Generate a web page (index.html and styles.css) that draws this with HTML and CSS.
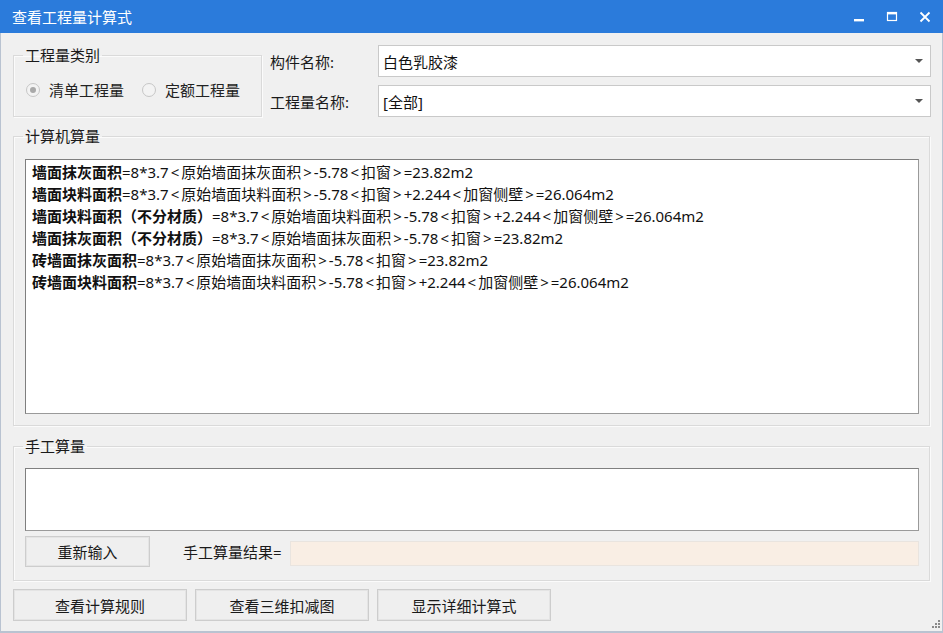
FILE: index.html
```html
<!DOCTYPE html>
<html lang="zh-CN">
<head>
<meta charset="utf-8">
<title>查看工程量计算式</title>
<link rel="stylesheet" href="styles.css">
</head>
<body>
<div class="window">
  <div class="titlebar">
    <span class="title">查看工程量计算式</span>
    <div class="controls">
      <svg class="ctl" width="14" height="14" viewBox="0 0 14 14"><rect x="2" y="9" width="10" height="2.4" fill="#fff"/></svg>
      <svg class="ctl" width="14" height="14" viewBox="0 0 14 14"><rect x="2.5" y="2.5" width="9" height="8" fill="none" stroke="#fff" stroke-width="1.2"/><rect x="2" y="2" width="10" height="2.4" fill="#fff"/></svg>
      <svg class="ctl" width="14" height="14" viewBox="0 0 14 14"><path d="M2.5 2.5 L11.5 11.5 M11.5 2.5 L2.5 11.5" stroke="#fff" stroke-width="1.8"/></svg>
    </div>
  </div>
  <div class="content">
    <div class="toprow">
      <fieldset class="group typegroup">
        <legend>工程量类别</legend>
        <div class="radios">
          <span class="radio"><span class="dot checked"></span>清单工程量</span>
          <span class="radio"><span class="dot"></span>定额工程量</span>
        </div>
      </fieldset>
      <div class="fields">
        <div class="field"><span class="flabel">构件名称:</span><div class="combo"><span>白色乳胶漆</span><span class="arrow"></span></div></div>
        <div class="field"><span class="flabel">工程量名称:</span><div class="combo"><span>[全部]</span><span class="arrow"></span></div></div>
      </div>
    </div>

    <fieldset class="group calcgroup">
      <legend>计算机算量</legend>
      <div class="textbox calcbox">
        <div class="line"><b>墙面抹灰面积</b>=8*3.7<i>&lt;</i>原始墙面抹灰面积<i>&gt;</i>-5.78<i>&lt;</i>扣窗<i>&gt;</i>=23.82m2</div>
        <div class="line"><b>墙面块料面积</b>=8*3.7<i>&lt;</i>原始墙面块料面积<i>&gt;</i>-5.78<i>&lt;</i>扣窗<i>&gt;</i>+2.244<i>&lt;</i>加窗侧壁<i>&gt;</i>=26.064m2</div>
        <div class="line"><b>墙面块料面积（不分材质）</b>=8*3.7<i>&lt;</i>原始墙面块料面积<i>&gt;</i>-5.78<i>&lt;</i>扣窗<i>&gt;</i>+2.244<i>&lt;</i>加窗侧壁<i>&gt;</i>=26.064m2</div>
        <div class="line"><b>墙面抹灰面积（不分材质）</b>=8*3.7<i>&lt;</i>原始墙面抹灰面积<i>&gt;</i>-5.78<i>&lt;</i>扣窗<i>&gt;</i>=23.82m2</div>
        <div class="line"><b>砖墙面抹灰面积</b>=8*3.7<i>&lt;</i>原始墙面抹灰面积<i>&gt;</i>-5.78<i>&lt;</i>扣窗<i>&gt;</i>=23.82m2</div>
        <div class="line"><b>砖墙面块料面积</b>=8*3.7<i>&lt;</i>原始墙面块料面积<i>&gt;</i>-5.78<i>&lt;</i>扣窗<i>&gt;</i>+2.244<i>&lt;</i>加窗侧壁<i>&gt;</i>=26.064m2</div>
      </div>
    </fieldset>

    <fieldset class="group handgroup">
      <legend>手工算量</legend>
      <div class="textbox handbox"></div>
      <div class="handrow">
        <div class="btn reinput">重新输入</div>
        <span class="reslabel">手工算量结果=</span>
        <div class="result"></div>
      </div>
    </fieldset>

    <div class="bottomrow">
      <div class="btn wide">查看计算规则</div>
      <div class="btn wide">查看三维扣减图</div>
      <div class="btn wide">显示详细计算式</div>
    </div>
  </div>
  <svg class="grip" width="10" height="10" viewBox="0 0 10 10">
    <rect x="7" y="1" width="2" height="2" fill="#8a8a8a"/>
    <rect x="4" y="4" width="2" height="2" fill="#8a8a8a"/>
    <rect x="7" y="4" width="2" height="2" fill="#8a8a8a"/>
    <rect x="1" y="7" width="2" height="2" fill="#8a8a8a"/>
    <rect x="4" y="7" width="2" height="2" fill="#8a8a8a"/>
    <rect x="7" y="7" width="2" height="2" fill="#8a8a8a"/>
  </svg>
</div>
</body>
</html>
```

FILE: styles.css
```css
* { box-sizing: border-box; }
html, body { margin: 0; padding: 0; }
body {
  width: 943px;
  height: 633px;
  overflow: hidden;
  background: #f0f0f0;
  font-family: "Noto Sans", "Noto Sans CJK SC", sans-serif;
  font-size: 15px;
  color: #1a1a1a;
}
.window {
  position: relative;
  width: 943px;
  height: 633px;
  border-left: 1px solid #b9c3d1;
  border-right: 1px solid #b9c3d1;
  border-bottom: 2px solid #b9c3d1;
  background: #f0f0f0;
}
.titlebar {
  height: 33px;
  margin: 0 -1px;
  background: #2b7bdb;
  display: flex;
  align-items: center;
  justify-content: space-between;
  padding-left: 12px;
  color: #fff;
}
.title { font-size: 15px; }
.controls { display: flex; align-items: center; gap: 19px; padding-right: 11px; }
.ctl { display: block; }

.content { padding: 0 12px; }

.group {
  margin: 0;
  border: 1px solid #dadada;
  box-shadow: inset 1px 1px 0 #fbfbfb, 1px 1px 0 #fbfbfb;
  padding: 0 10px 0 11px;
}
.group legend {
  padding: 0 2px;
  margin-left: -2px;
  font-size: 15px;
  line-height: 20px;
  color: #1a1a1a;
}

.toprow { display: flex; padding-top: 12px; gap: 8px; }
.typegroup { width: 249px; height: 72px; padding-left: 11px; }
.radios { display: flex; gap: 18px; padding-top: 14px; padding-left: 1px; }
.radio { display: flex; align-items: center; font-size: 15px; color: #222; }
.dot {
  width: 14px; height: 14px; border-radius: 50%;
  border: 1px solid #c6c6c6; background: #f3f3f3;
  margin-right: 9px; position: relative;
}
.dot.checked::after {
  content: ""; position: absolute; left: 3px; top: 3px;
  width: 6px; height: 6px; border-radius: 50%; background: #a9a9a9;
}

.fields { flex: 1; display: flex; flex-direction: column; gap: 8px; }
.field { display: flex; align-items: center; }
.flabel { width: 108px; font-size: 15px; color: #1a1a1a; }
.combo {
  flex: 1; height: 32px; margin-right: -1px;
  background: #fff;
  border: 1px solid #c9c9c9;
  display: flex; align-items: center; justify-content: space-between;
  padding: 0 7px 0 4px;
  font-size: 15px; color: #111;
}
.arrow {
  width: 0; height: 0;
  border-left: 4px solid transparent;
  border-right: 4px solid transparent;
  border-top: 4px solid #555;
}

.calcgroup { margin-top: 9px; height: 300px; }
.textbox {
  background: #fff;
  border: 1px solid #7f7f7f;
  border-right-color: #9a9a9a;
  border-bottom-color: #9a9a9a;
}
.calcbox { height: 255px; padding: 1px 6px; margin-top: 13px; }
.line { line-height: 22px; font-size: 15px; color: #111; white-space: nowrap; }
.line b { font-weight: 700; }
.line i { font-style: normal; padding: 0 2px; }

.handgroup { margin-top: 10px; height: 145px; }
.handbox { height: 63px; margin-top: 12px; }
.handrow { display: flex; align-items: center; margin-top: 5px; }
.btn {
  background: #efefef;
  border: 1px solid #cdcdcd;
  box-shadow: inset 0 0 0 1px #e4e4e4;
  display: flex; align-items: center; justify-content: center;
  font-size: 15px; color: #1a1a1a;
}
.reinput { width: 125px; height: 31px; }
.reslabel { margin-left: 33px; width: 107px; font-size: 15px; }
.result {
  flex: 1; height: 25px; margin-top: 3px;
  background: #f9eee4;
  border: 1px solid #e9e4df;
}

.bottomrow { display: flex; gap: 8px; margin-top: 8px; }
.wide { width: 174px; height: 32px; }

.grip { position: absolute; right: 1px; bottom: 2px; }
```
